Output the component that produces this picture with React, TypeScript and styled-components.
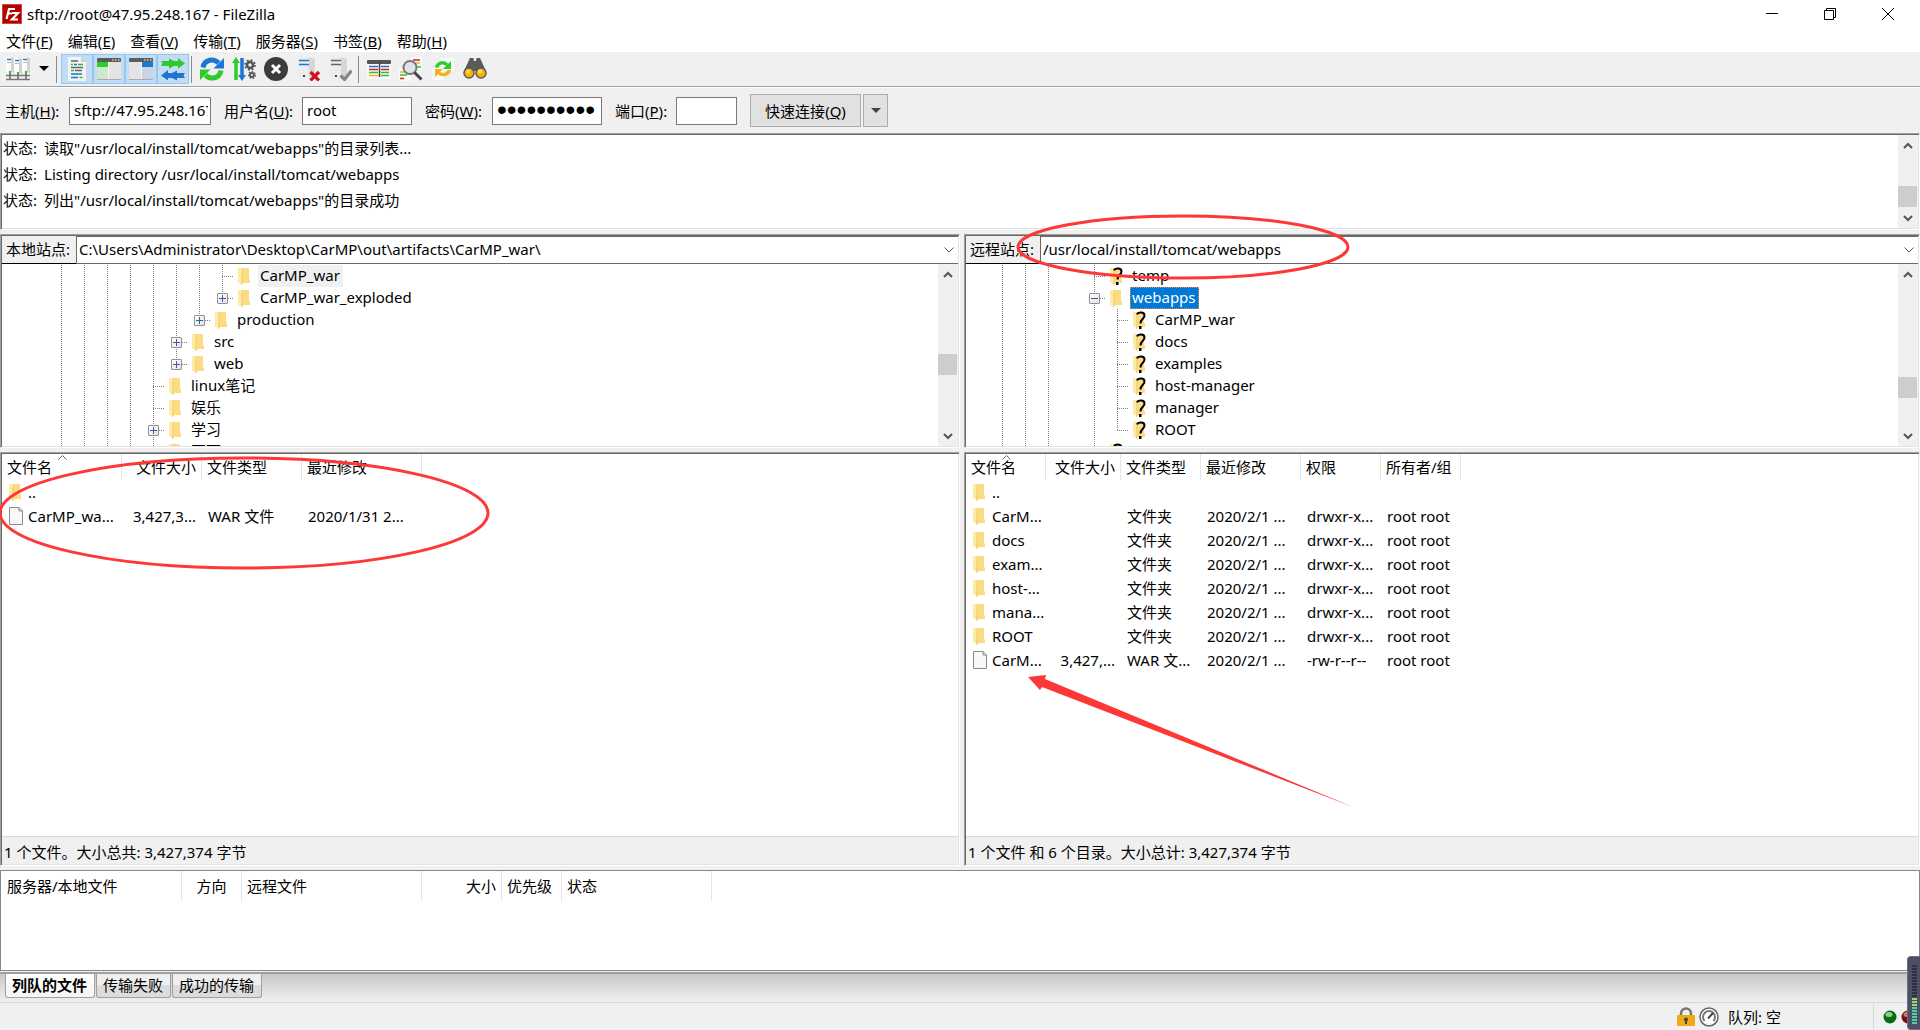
import React from "react";
import styled, { createGlobalStyle, css } from "styled-components";

const GlobalStyle = createGlobalStyle`
  * { box-sizing: border-box; }
  html, body, #root { margin: 0; height: 100%; }
  body { overflow: hidden; background: #f0f0f0; }
  body, button, input, table {
    font-family: "Noto Sans", "Noto Sans CJK SC", sans-serif;
    font-size: 15px;
    color: #000;
  }
  button, input { margin: 0; padding: 0; border: 0; border-radius: 0; }
`;

const Window = styled.div`
  position: relative;
  display: flex;
  flex-direction: column;
  height: 100vh;
  line-height: 20px;
  white-space: nowrap;
  background: #f0f0f0;
`;

/* ---------- title bar and menu ---------- */
const TitleBar = styled.header`
  display: flex;
  align-items: center;
  height: 28px;
  padding: 0 3px 0 2px;
  background: #fff;
`;
const Title = styled.h1`
  flex: 1;
  margin: 0 0 0 5px;
  font-size: 15px;
  font-weight: 400;
`;
const WindowButton = styled.button`
  display: grid;
  place-items: center;
  width: 58px;
  height: 28px;
  background: none;
`;
const MenuBar = styled.nav`
  display: flex;
  align-items: center;
  gap: 15px;
  height: 24px;
  padding: 2px 0 0 6px;
  background: #fff;
`;
const MenuItem = styled.button`
  background: none;
  line-height: 20px;
`;
const Key = styled.span`
  text-decoration: underline;
`;

/* ---------- toolbars ---------- */
const ToolBar = styled.div`
  display: flex;
  align-items: center;
  height: 36px;
  padding: 0 2px 2px;
  box-shadow: inset 0 -1px #fff, inset 0 -2px #a0a0a0;
`;
const ToolButton = styled.button<{ $on?: boolean; $narrow?: boolean }>`
  display: grid;
  place-items: center;
  width: ${(p) => (p.$narrow ? 20 : 32)}px;
  height: 30px;
  background: ${(p) => (p.$on ? "#c3dcf3" : "none")};
  ${(p) => p.$on && css`box-shadow: inset 0 0 0 1px #90c8f6;`}
`;
const Divider = styled.span`
  width: 1px;
  height: 27px;
  margin: 0 4px 0 2px;
  background: #8c8c8c;
`;
const QuickBar = styled.form`
  display: flex;
  align-items: center;
  height: 45px;
  padding-left: 5px;
`;
const FieldLabel = styled.label<{ $width: number }>`
  width: ${(p) => p.$width}px;
  margin-right: 8px;
`;
const Field = styled.input<{ $width: number }>`
  width: ${(p) => p.$width}px;
  height: 28px;
  margin-right: 13px;
  padding: 0 2px 2px 4px;
  border: 1px solid #7a7a7a;
  background: #fff;
  &[type="password"] {
    font-family: "Liberation Sans", sans-serif;
    font-size: 28px;
  }
`;
const PushButton = styled.button<{ $width: number }>`
  display: grid;
  place-items: center;
  width: ${(p) => p.$width}px;
  height: 33px;
  margin-right: 2px;
  border: 1px solid #adadad;
  background: #e1e1e1;
`;

/* ---------- panes ---------- */
const sunken = css`
  padding: 1px;
  border: 1px solid;
  border-color: #a0a0a0 #fff #fff #a0a0a0;
  box-shadow: inset 1px 1px #696969, inset -1px -1px #e3e3e3;
`;
const LogPane = styled.section`
  ${sunken}
  display: flex;
  height: 97px;
  background: #fff;
`;
const LogLines = styled.div`
  flex: 1;
  padding: 0 1px;
`;
const LogLine = styled.p`
  display: flex;
  gap: 7px;
  margin: 0;
  line-height: 26px;
`;
const Split = styled.main`
  flex: 1;
  min-height: 0;
  display: grid;
  grid-template-columns: 50% minmax(0, 1fr);
  margin: 4px 0;
`;
const Side = styled.section`
  display: flex;
  flex-direction: column;
  gap: 4px;
  min-height: 0;
  & + & { margin-left: 4px; }
`;
const TreePane = styled.div`
  ${sunken}
  display: flex;
  flex-direction: column;
  height: 214px;
  background: #fff;
`;
const PathRow = styled.div`
  display: flex;
  height: 28px;
`;
const PathLabel = styled.label`
  width: 74px;
  padding-left: 4px;
  border-bottom: 1px solid #000;
  background: #f0f0f0;
  line-height: 26px;
`;
const PathBox = styled.div`
  flex: 1;
  display: flex;
  border: solid #696969;
  border-width: 1px 0 1px 1px;
`;
const PathInput = styled.input`
  flex: 1;
  padding: 0 2px 2px;
  background: #fff;
`;
const DropButton = styled.button`
  display: grid;
  place-items: center;
  width: 18px;
  background: #fff;
`;
const TreeArea = styled.div`
  flex: 1;
  display: flex;
  min-height: 0;
`;
const Tree = styled.ul<{ $indent: number }>`
  flex: 1;
  margin: 0;
  padding: 1px 0 0 ${(p) => p.$indent}px;
  overflow: hidden;
  list-style: none;
`;
const TreeRow = styled.li`
  display: flex;
  height: 22px;
`;
const DOT = "#808080";
const dotsDown = `repeating-linear-gradient(${DOT} 0 1px, transparent 1px 2px)`;
const dotsAcross = `repeating-linear-gradient(90deg, ${DOT} 0 1px, transparent 1px 2px)`;
type GuideKind = "none" | "line" | "tee" | "end";
const guideImage: Record<GuideKind, string> = {
  none: "none",
  line: `${dotsDown} 11px 0 / 1px 100% no-repeat`,
  tee: `${dotsDown} 11px 0 / 1px 100% no-repeat, ${dotsAcross} 11px 11px / 12px 1px no-repeat`,
  end: `${dotsDown} 11px 0 / 1px 11px no-repeat, ${dotsAcross} 11px 11px / 12px 1px no-repeat`,
};
const Guide = styled.span<{ $kind: GuideKind }>`
  display: grid;
  place-items: center;
  width: 23px;
  height: 22px;
  background: ${(p) => guideImage[p.$kind]};
`;
const Expander = styled.button`
  display: grid;
  place-items: center;
  width: 11px;
  height: 11px;
  border: 1px solid #919191;
  border-radius: 1px;
  background: linear-gradient(135deg, #fff, #e2e2e2);
`;
const TreeIcon = styled.span`
  display: grid;
  align-items: center;
  width: 24px;
  padding-left: 4px;
`;
const TreeLabel = styled.span<{ $mark?: "idle" | "active" }>`
  padding: 0 3px 0 2px;
  line-height: 20px;
  ${(p) => p.$mark === "idle" && css`background: #f0f0f0;`}
  ${(p) => p.$mark === "active" && css`
    padding: 0 2px 0 1px;
    border: 1px dotted #ff8728;
    line-height: 18px;
    color: #fff;
    background: #0078d7;
  `}
`;

/* ---------- scroll bar ---------- */
const Bar = styled.div`
  display: flex;
  flex-direction: column;
  width: 20px;
  background: #f0f0f0;
`;
const BarButton = styled.button`
  display: grid;
  place-items: center;
  width: 19px;
  height: 20px;
  background: none;
`;
const BarTrack = styled.div<{ $offset: number }>`
  flex: 1;
  padding-top: ${(p) => p.$offset}px;
`;
const BarThumb = styled.div`
  width: 19px;
  height: 21px;
  background: #cdcdcd;
`;

/* ---------- file lists ---------- */
const ListPane = styled.div`
  ${sunken}
  flex: 1;
  display: flex;
  flex-direction: column;
  min-height: 0;
  background: #fff;
`;
const ListArea = styled.div`
  flex: 1;
  min-height: 0;
`;
const Table = styled.table`
  table-layout: fixed;
  width: 0;
  border-collapse: separate;
  border-spacing: 0;
`;
const Head = styled.th<{ $align?: string }>`
  position: relative;
  height: 26px;
  padding: 0 5px;
  border-right: 1px solid #e5e5e5;
  font-weight: 400;
  line-height: 26px;
  text-align: ${(p) => p.$align ?? "left"};
`;
const SortMark = styled.svg`
  position: absolute;
  top: 1px;
  left: 50%;
  margin-left: -4px;
`;
const Cell = styled.td<{ $align?: string }>`
  height: 24px;
  padding: 0 6px;
  overflow: hidden;
  line-height: 24px;
  text-align: ${(p) => p.$align ?? "left"};
`;
const NameCell = styled.div`
  display: flex;
  align-items: center;
  gap: 5px;
  height: 24px;
  padding-left: 1px;
  & > svg { flex: none; }
`;
const ListStatus = styled.footer`
  height: 28px;
  padding-left: 2px;
  border-top: 1px solid #d7d7d7;
  background: #f0f0f0;
  line-height: 30px;
`;

/* ---------- queue ---------- */
const QueuePane = styled.section`
  height: 101px;
  border: 1px solid #828790;
  padding-left: 1px;
  background: #fff;
  & th { height: 28px; line-height: 30px; }
`;
const TabStrip = styled.div`
  display: flex;
  align-items: flex-start;
  gap: 1px;
  height: 31px;
  margin-top: 1px;
  padding-left: 5px;
  border-top: 2px solid #a0a0a0;
  border-bottom: 1px solid #d7d7d7;
  background: linear-gradient(#c8c8c8, #f0f0f0);
`;
const Tab = styled.button<{ $on?: boolean }>`
  height: 24px;
  padding: 0 7px 2px 6px;
  border: 1px solid #a0a0a0;
  border-top: 0;
  border-radius: 0 0 3px 3px;
  line-height: 20px;
  font-weight: ${(p) => (p.$on ? 700 : 400)};
  background: ${(p) => (p.$on ? "linear-gradient(#fff, #f4f4f4)" : "linear-gradient(#efefef 50%, #dcdcdc 50%)")};
`;
const StatusBar = styled.footer`
  display: flex;
  align-items: center;
  justify-content: flex-end;
  height: 27px;
`;
const QueueState = styled.div`
  display: flex;
  align-items: center;
  gap: 3px;
  width: 198px;
  height: 25px;
  border-right: 1px solid #d7d7d7;
  & > span { margin-left: 6px; }
`;
const Leds = styled.div`
  display: flex;
  gap: 4px;
  width: 46px;
  padding-left: 9px;
`;
const Meter = styled.aside`
  position: absolute;
  right: 0;
  bottom: 0;
  width: 13px;
  height: 74px;
  padding: 8px 3px 0 4px;
  border: 1px solid #6b7086;
  border-right: 0;
  border-radius: 4px 0 0 4px;
  background: #4b5064;
`;
const Markup = styled.svg`
  position: absolute;
  top: 0;
  left: 0;
  pointer-events: none;
`;

/* ---------- icons ---------- */
const Folder = ({ unknown }: { unknown?: boolean }) => (
  <svg width="14" height="18" viewBox="0 0 14 18">
    <path d="M3 1h8v11l1 1v3H4z" fill="#f3d06e" />
    <path d="M5 1h6v11l1 1v3H5z" fill="#fbdc82" />
    <path d="M0 1h3l2 3v13l-2 1-1-2H0z" fill="#ffeaa6" />
    <path d="M4 3l1 1v13l-2 1V5z" fill="#f5d67e" />
    {unknown && (
      <g>
        <path d="M4 3.500C5 1 11.500 .5 11.500 4.500C11.500 8 7.500 7.500 7.500 12.500" fill="none" stroke="#000" strokeWidth="2" />
        <rect x="6" y="15" width="2.500" height="3" fill="#000" />
      </g>
    )}
  </svg>
);
const FileIcon = () => (
  <svg width="14" height="18" viewBox="0 0 14 18">
    <path d="M.5 .5H10L13.500 4V17.500H.5z" fill="#f8f8f8" stroke="#8a8a8a" />
    <path d="M10 .5V4h3.500" fill="none" stroke="#8a8a8a" />
  </svg>
);
const ServerShape = ({ stripe }: { stripe: string }) => (
  <g>
    <path d="M2 0h11v20H2z" fill="#ececec" />
    <path d="M13 0l6 2v20l-6-2z" fill="#d6d6d6" />
    <path d="M3 3.500h10M3 7.500h10" stroke={stripe} strokeWidth="1.500" />
    <rect x="7" y="18" width="2" height="2" fill="#444" />
  </g>
);
const PanelShape = ({ fill, tint, left }: { fill: string; tint: string; left?: boolean }) => (
  <g>
    <rect x="0" y="2" width="24" height="21" fill="#e4e4e4" />
    <rect x="0" y="1" width="24" height="4" rx="1" fill="#5c5c5c" />
    <path d="M15 3h1.500M18 3h1.500M21 3h1.500" stroke="#ccc" strokeWidth="1.500" />
    <rect x={left ? 0 : 13} y="5" width="11" height="5" fill={fill} />
    <rect x={left ? 0 : 13} y="10" width="11" height="13" fill={tint} />
    <rect x={left ? 11 : 12} y="5" width="1" height="18" fill="#f6f6f6" />
    <path d="M0 22.500h24" stroke="#aaa" />
  </g>
);
const iconArt: Record<string, React.ReactNode> = {
  sites: (
    <g>
      {[0, 8, 16].map((x, i) => (
        <g key={x} transform={`translate(${x} ${i === 1 ? 1 : 0})`}>
          <path d="M0 0h6v15H0z" fill="#fdfdfd" />
          <path d="M5 0l3 1v15l-3-1z" fill="#d2d2d2" />
          <path d="M1 2.500h4" stroke="#1c7bd4" strokeWidth="1.500" />
          <path d="M1 5.500h4" stroke="#bcbcbc" />
          <path d="M4 14v8" stroke="#666" strokeWidth="1.500" />
          <rect x="3" y="14" width="2" height="3" fill="#2db82d" />
        </g>
      ))}
      <path d="M0 18.500h24M0 22.500h24" stroke="#777" strokeWidth="1.500" />
    </g>
  ),
  log: (
    <g>
      <path d="M3 0h13l5 5v19H3z" fill="#f3f3f3" />
      <path d="M16 0v5h5z" fill="#cfcfcf" />
      <g strokeWidth="1.500">
        <path d="M6 4h7M6 10.500h12M10 13.500h7" stroke="#666" />
        <path d="M9 7.500h3M6 17h11M6 20.500h7" stroke="#1b77d2" />
        <path d="M6 7.500h2M13 7.500h5M6 13.500h3M14.500 20.500h3" stroke="#2cc02c" />
      </g>
    </g>
  ),
  local: <PanelShape left fill="#2ccc2c" tint="#cfe6cf" />,
  remote: <PanelShape fill="#1b77d2" tint="#c6d4e4" />,
  queue: (
    <g>
      <path d="M0 4h8V1.500L13 4h4V1l7 5.500-7 5V9h-4l-5 2.500V9H0l1.500-2.500z" fill="#2ccc2c" />
      <path d="M24 16h-8v-2.500L11 16H7v-3l-7 5.500 7 5V21h4l5 2.500V21h8l-1.500-2.500z" fill="#1b77d2" />
    </g>
  ),
  refresh: (
    <g fill="none" strokeWidth="5">
      <path d="M3 10.500C4.500 2 14 1 18.500 6" stroke="#1b77d2" />
      <path d="M24 1v10.500H13.500z" fill="#1b77d2" />
      <path d="M21 13.500C19.500 22 10 23 5.500 18" stroke="#2ccc2c" />
      <path d="M0 23V12.500h10.500z" fill="#2ccc2c" />
    </g>
  ),
  process: (
    <g>
      <path d="M4 23V3" stroke="#2ccc2c" strokeWidth="3.500" />
      <path d="M0 6l4-6 4 6z" fill="#2ccc2c" />
      <path d="M10 1v20" stroke="#1b77d2" strokeWidth="3.500" />
      <path d="M6 18l4 6 4-6z" fill="#1b77d2" />
      <circle cx="18" cy="8" r="3" fill="none" stroke="#555" strokeWidth="2.500" />
      <circle cx="18" cy="8" r="4.900" fill="none" stroke="#555" strokeWidth="1.800" strokeDasharray="1.900 1.948" />
      <circle cx="20" cy="18" r="2" fill="none" stroke="#555" strokeWidth="1.800" />
      <circle cx="20" cy="18" r="3.400" fill="none" stroke="#555" strokeWidth="1.200" strokeDasharray="1.500 1.552" />
    </g>
  ),
  cancel: (
    <g>
      <circle cx="12" cy="12" r="12" fill="#3c3c3c" />
      <path d="M8 8l8 8M16 8l-8 8" stroke="#fff" strokeWidth="3" />
    </g>
  ),
  disconnect: (
    <g>
      <ServerShape stripe="#1b77d2" />
      <path d="M14.500 15l8.500 8.500M23 15l-8.500 8.500" stroke="#c9161c" strokeWidth="3.200" />
    </g>
  ),
  reconnect: (
    <g>
      <ServerShape stripe="#666" />
      <path d="M12.500 18.500l4 4 7-9" fill="none" stroke="#868686" strokeWidth="3.200" />
    </g>
  ),
  filter: (
    <g>
      <rect x="0" y="3" width="24" height="19" fill="#f8f8f8" />
      <rect x="0" y="3" width="24" height="4" rx="1" fill="#555" />
      <g strokeWidth="1.500">
        <path d="M2 9.500h9M14 9.500h8" stroke="#1b77d2" />
        <path d="M2 12.500h9M14 12.500h8" stroke="#d0262c" />
        <path d="M2 15.500h9M14 15.500h8M14 18.500h8" stroke="#2cc02c" />
        <path d="M2 18.500h9" stroke="#f2b01e" />
      </g>
      <path d="M12.500 5v15" stroke="#444" strokeWidth="1.500" />
    </g>
  ),
  find: (
    <g>
      <rect x="12" y="0" width="11" height="13" fill="#fafafa" />
      <path d="M14 3h7" stroke="#c9262c" strokeWidth="1.500" />
      <path d="M16 6h5" stroke="#f2b01e" strokeWidth="1.500" />
      <path d="M18 10h4" stroke="#2cc02c" strokeWidth="1.500" />
      <rect x="0" y="11" width="12" height="13" fill="#fafafa" />
      <path d="M1 15h5" stroke="#f2b01e" strokeWidth="1.500" />
      <path d="M1 18h7" stroke="#2cc02c" strokeWidth="1.500" />
      <path d="M1 21.500h4" stroke="#c9262c" strokeWidth="1.500" />
      <circle cx="11" cy="10.500" r="6.500" fill="#dfe4ea" stroke="#777" strokeWidth="2" />
      <path d="M15.500 15.500l7 7" stroke="#444" strokeWidth="3" />
    </g>
  ),
  sync: (
    <g>
      <rect x="9" y="0" width="15" height="15" fill="#fbfbfb" stroke="#e4e4e4" />
      <rect x="0" y="10" width="14" height="14" fill="#fbfbfb" stroke="#e4e4e4" />
      <path d="M5.500 10.500C7 5 13.500 4.500 16 8" fill="none" stroke="#2ccc2c" strokeWidth="3.500" />
      <path d="M20 4v8h-8z" fill="#2ccc2c" />
      <path d="M18.500 13C17 18 10 19 8 15.500" fill="none" stroke="#f2b01e" strokeWidth="3.500" />
      <path d="M4 20v-8h8z" fill="#f2b01e" />
    </g>
  ),
  search: (
    <g>
      <path d="M7 1h3.500l.5 3h2l.5-3H17l6 13-3 4h-5l-1-4h-4l-1 4H4l-3-4z" fill="#5a5a5a" />
      <circle cx="6" cy="16" r="5" fill="#f7b500" stroke="#5a5a5a" strokeWidth="1.500" />
      <circle cx="18" cy="16" r="5" fill="#f7b500" stroke="#5a5a5a" strokeWidth="1.500" />
      <circle cx="5" cy="14.500" r="2" fill="#ffd957" />
      <circle cx="17" cy="14.500" r="2" fill="#ffd957" />
    </g>
  ),
};
const Icon = ({ name }: { name: string }) => (
  <svg width="24" height="24" viewBox="0 0 24 24">{iconArt[name]}</svg>
);
const Caret = ({ color }: { color: string }) => (
  <svg width="10" height="6" viewBox="0 0 10 6"><path d="M0 0h10L5 5z" fill={color} /></svg>
);
const Logo = () => (
  <svg width="20" height="20" viewBox="0 0 20 20">
    <rect width="20" height="20" fill="#b30000" />
    <rect x=".5" y=".5" width="19" height="19" fill="none" stroke="#e88" strokeDasharray="1 1" />
    <path d="M4.500 15L7 5h6M6 9.500h4M10 9h6l-6 6.500h6" fill="none" stroke="#fff" strokeWidth="2.200" />
  </svg>
);
const Led = ({ color, glow }: { color: string; glow: string }) => (
  <svg width="14" height="14" viewBox="0 0 14 14">
    <circle cx="7" cy="7" r="6.500" fill={color} />
    <ellipse cx="6" cy="4.500" rx="3.500" ry="2.500" fill={glow} />
  </svg>
);

/* ---------- parts ---------- */
const Mn = ({ text, k, tail = "" }: { text: string; k: string; tail?: string }) => (
  <>{text}(<Key>{k}</Key>){tail}</>
);

const ScrollBar = ({ offset }: { offset: number }) => (
  <Bar>
    <BarButton type="button" aria-label="up">
      <svg width="10" height="7" viewBox="0 0 10 7"><path d="M1 6l4-4 4 4" fill="none" stroke="#555" strokeWidth="2" /></svg>
    </BarButton>
    <BarTrack $offset={offset}><BarThumb /></BarTrack>
    <BarButton type="button" aria-label="down">
      <svg width="10" height="7" viewBox="0 0 10 7"><path d="M1 1l4 4 4-4" fill="none" stroke="#555" strokeWidth="2" /></svg>
    </BarButton>
  </Bar>
);

type Node = {
  name: string;
  guides: string; // one letter per level: n none, l line, t tee, e end
  box?: "+" | "-";
  unknown?: boolean;
  mark?: "idle" | "active";
};
const kinds: Record<string, GuideKind> = { n: "none", l: "line", t: "tee", e: "end" };

const localTree: Node[] = [
  { name: "CarMP_war", guides: "lllllllt", mark: "idle" },
  { name: "CarMP_war_exploded", guides: "llllllle", box: "+" },
  { name: "production", guides: "lllllle", box: "+" },
  { name: "src", guides: "lllllt", box: "+" },
  { name: "web", guides: "llllle", box: "+" },
  { name: "linux笔记", guides: "llllt" },
  { name: "娱乐", guides: "llllt" },
  { name: "学习", guides: "llllt", box: "+" },
  { name: "页面", guides: "llllt" },
];
const remoteTree: Node[] = [
  { name: "temp", guides: "lllnt", unknown: true },
  { name: "webapps", guides: "lllnt", box: "-", mark: "active" },
  { name: "CarMP_war", guides: "lllnlt", unknown: true },
  { name: "docs", guides: "lllnlt", unknown: true },
  { name: "examples", guides: "lllnlt", unknown: true },
  { name: "host-manager", guides: "lllnlt", unknown: true },
  { name: "manager", guides: "lllnlt", unknown: true },
  { name: "ROOT", guides: "lllnle", unknown: true },
  { name: "work", guides: "lllne", unknown: true },
];

const TreeView = ({ id, label, path, nodes, indent, offset }: {
  id: string; label: string; path: string; nodes: Node[]; indent: number; offset: number;
}) => (
  <TreePane>
    <PathRow>
      <PathLabel htmlFor={id}>{label}</PathLabel>
      <PathBox>
        <PathInput id={id} defaultValue={path} />
        <DropButton type="button" aria-label="open">
          <svg width="10" height="6" viewBox="0 0 10 6"><path d="M.5 .5L5 5 9.500 .5" fill="none" stroke="#555" /></svg>
        </DropButton>
      </PathBox>
    </PathRow>
    <TreeArea>
      <Tree $indent={indent}>
        {nodes.map((n) => (
          <TreeRow key={n.name}>
            {n.guides.split("").map((g, i) => (
              <Guide key={i} $kind={kinds[g]}>
                {n.box && i === n.guides.length - 1 && (
                  <Expander type="button" aria-label="toggle">
                    <svg width="7" height="7" viewBox="0 0 7 7">
                      <path d={n.box === "+" ? "M0 3.500h7M3.500 0v7" : "M0 3.500h7"} stroke="#3b5aa0" />
                    </svg>
                  </Expander>
                )}
              </Guide>
            ))}
            <TreeIcon><Folder unknown={n.unknown} /></TreeIcon>
            <TreeLabel $mark={n.mark}>{n.name}</TreeLabel>
          </TreeRow>
        ))}
      </Tree>
      <ScrollBar offset={offset} />
    </TreeArea>
  </TreePane>
);

type Column = { title: string; width: number; align?: string };
const localColumns: Column[] = [
  { title: "文件名", width: 120 },
  { title: "文件大小", width: 80, align: "right" },
  { title: "文件类型", width: 100 },
  { title: "最近修改", width: 120 },
];
const localFiles = [["..", "", "", ""], ["CarMP_wa...", "3,427,3...", "WAR 文件", "2020/1/31 2..."]];
const remoteColumns: Column[] = [
  { title: "文件名", width: 80 },
  { title: "文件大小", width: 75, align: "right" },
  { title: "文件类型", width: 80 },
  { title: "最近修改", width: 100 },
  { title: "权限", width: 80 },
  { title: "所有者/组", width: 80 },
];
const folderRow = (name: string) => [name, "", "文件夹", "2020/2/1 ...", "drwxr-x...", "root root"];
const remoteFiles = [
  ["..", "", "", "", "", ""],
  ...["CarM...", "docs", "exam...", "host-...", "mana...", "ROOT"].map(folderRow),
  ["CarM...", "3,427,...", "WAR 文...", "2020/2/1 ...", "-rw-r--r--", "root root"],
];
const queueColumns: Column[] = [
  { title: "服务器/本地文件", width: 180 },
  { title: "方向", width: 60, align: "center" },
  { title: "远程文件", width: 180 },
  { title: "大小", width: 80, align: "right" },
  { title: "优先级", width: 60 },
  { title: "状态", width: 150 },
];

const Grid = ({ columns, rows, sorted }: { columns: Column[]; rows: string[][]; sorted?: boolean }) => (
  <Table>
    <colgroup>{columns.map((c) => <col key={c.title} style={{ width: c.width }} />)}</colgroup>
    <thead>
      <tr>
        {columns.map((c, i) => (
          <Head key={c.title} $align={c.align}>
            {c.title}
            {sorted && i === 0 && (
              <SortMark width="9" height="5" viewBox="0 0 9 5"><path d="M.5 4.500l4-4 4 4" fill="none" stroke="#666" /></SortMark>
            )}
          </Head>
        ))}
      </tr>
    </thead>
    <tbody>
      {rows.map((r, y) => (
        <tr key={y}>
          {r.map((text, x) => (
            <Cell key={x} $align={columns[x].align}>
              {x === 0 ? (
                <NameCell>{r[1] ? <FileIcon /> : <Folder />}{text}</NameCell>
              ) : text}
            </Cell>
          ))}
        </tr>
      ))}
    </tbody>
  </Table>
);

const menus: [string, string][] = [
  ["文件", "F"], ["编辑", "E"], ["查看", "V"], ["传输", "T"], ["服务器", "S"], ["书签", "B"], ["帮助", "H"],
];
const logLines = [
  '读取"/usr/local/install/tomcat/webapps"的目录列表...',
  "Listing directory /usr/local/install/tomcat/webapps",
  '列出"/usr/local/install/tomcat/webapps"的目录成功',
];

export default function App() {
  return (
    <Window>
      <GlobalStyle />
      <TitleBar>
        <Logo />
        <Title>sftp://root@47.95.248.167 - FileZilla</Title>
        <WindowButton aria-label="minimize">
          <svg width="12" height="12"><path d="M0 5.500h12" stroke="#000" /></svg>
        </WindowButton>
        <WindowButton aria-label="restore">
          <svg width="12" height="12"><path d="M.5 2.500h9v9h-9zM2.500 2V.5h9v9H10" fill="none" stroke="#000" /></svg>
        </WindowButton>
        <WindowButton aria-label="close">
          <svg width="12" height="12"><path d="M0 0l12 12M12 0L0 12" stroke="#000" /></svg>
        </WindowButton>
      </TitleBar>
      <MenuBar>
        {menus.map(([t, k]) => <MenuItem key={k}><Mn text={t} k={k} /></MenuItem>)}
      </MenuBar>
      <ToolBar>
        <ToolButton aria-label="sites"><Icon name="sites" /></ToolButton>
        <ToolButton $narrow aria-label="site list"><Caret color="#000" /></ToolButton>
        <Divider />
        {["log", "local", "remote", "queue"].map((n) => <ToolButton key={n} $on aria-label={n}><Icon name={n} /></ToolButton>)}
        <Divider />
        {["refresh", "process", "cancel", "disconnect", "reconnect"].map((n) => (
          <ToolButton key={n} aria-label={n}><Icon name={n} /></ToolButton>
        ))}
        <Divider />
        {["filter", "find", "sync", "search"].map((n) => <ToolButton key={n} aria-label={n}><Icon name={n} /></ToolButton>)}
      </ToolBar>
      <QuickBar onSubmit={(e) => e.preventDefault()}>
        <FieldLabel $width={56} htmlFor="host"><Mn text="主机" k="H" tail=":" /></FieldLabel>
        <Field $width={142} id="host" defaultValue="sftp://47.95.248.167" />
        <FieldLabel $width={70} htmlFor="user"><Mn text="用户名" k="U" tail=":" /></FieldLabel>
        <Field $width={110} id="user" defaultValue="root" />
        <FieldLabel $width={59} htmlFor="pass"><Mn text="密码" k="W" tail=":" /></FieldLabel>
        <Field $width={110} id="pass" type="password" defaultValue="0000000000" />
        <FieldLabel $width={53} htmlFor="port"><Mn text="端口" k="P" tail=":" /></FieldLabel>
        <Field $width={61} id="port" />
        <PushButton $width={111}><span><Mn text="快速连接" k="Q" /></span></PushButton>
        <PushButton $width={25} type="button" aria-label="history"><Caret color="#444" /></PushButton>
      </QuickBar>
      <LogPane>
        <LogLines>
          {logLines.map((l) => <LogLine key={l}><span>状态:</span><span>{l}</span></LogLine>)}
        </LogLines>
        <ScrollBar offset={31} />
      </LogPane>
      <Split>
        <Side>
          <TreeView id="local" label="本地站点:" path="C:\Users\Administrator\Desktop\CarMP\out\artifacts\CarMP_war\"
            nodes={localTree} indent={48} offset={70} />
          <ListPane>
            <ListArea><Grid columns={localColumns} rows={localFiles} sorted /></ListArea>
            <ListStatus>1 个文件。大小总共: 3,427,374 字节</ListStatus>
          </ListPane>
        </Side>
        <Side>
          <TreeView id="remote" label="远程站点:" path="/usr/local/install/tomcat/webapps"
            nodes={remoteTree} indent={25} offset={93} />
          <ListPane>
            <ListArea><Grid columns={remoteColumns} rows={remoteFiles} sorted /></ListArea>
            <ListStatus>1 个文件 和 6 个目录。大小总计: 3,427,374 字节</ListStatus>
          </ListPane>
        </Side>
      </Split>
      <QueuePane><Grid columns={queueColumns} rows={[]} /></QueuePane>
      <TabStrip>
        <Tab $on>列队的文件</Tab>
        <Tab>传输失败</Tab>
        <Tab>成功的传输</Tab>
      </TabStrip>
      <StatusBar>
        <QueueState>
          <svg width="20" height="20" viewBox="0 0 20 20">
            <path d="M5 9V6.500a5 5 0 0 1 10 0V9" fill="none" stroke="#777" strokeWidth="2.500" />
            <rect x="1" y="8" width="18" height="11" rx="1" fill="#eeab12" />
            <circle cx="10" cy="12.500" r="2" fill="#444" />
            <path d="M10 12v5" stroke="#444" strokeWidth="2" />
          </svg>
          <svg width="20" height="20" viewBox="0 0 20 20">
            <circle cx="10" cy="10" r="9" fill="#fff" stroke="#666" strokeWidth="1.500" />
            <path d="M5.500 14a6 6 0 1 1 9 0" fill="none" stroke="#777" strokeWidth="2" />
            <path d="M9 11.500L14 6" stroke="#444" strokeWidth="2" />
          </svg>
          <span>队列: 空</span>
        </QueueState>
        <Leds>
          <Led color="#0a6b12" glow="#8fd08f" />
          <Led color="#7a0d12" glow="#b98080" />
        </Leds>
      </StatusBar>
      <Meter>
        <svg width="5" height="60" viewBox="0 0 5 60">
          {Array.from({ length: 20 }, (_, i) => (
            <rect key={i} y={i * 3} width="5" height="2" fill={i < 11 ? "#2c3040" : i < 14 ? "#a8d36a" : "#4fd0a8"} />
          ))}
        </svg>
      </Meter>
      <Markup width="1920" height="1030" viewBox="0 0 1920 1030">
        <g fill="none" stroke="#fd3836" strokeWidth="3">
          <ellipse cx="244" cy="513" rx="244" ry="55" />
          <ellipse cx="1183" cy="247" rx="165" ry="31" />
        </g>
        <path d="M1028 677L1046 675 1045 679 1353 807 1042 687 1040 690z" fill="#fd3836" />
      </Markup>
    </Window>
  );
}
